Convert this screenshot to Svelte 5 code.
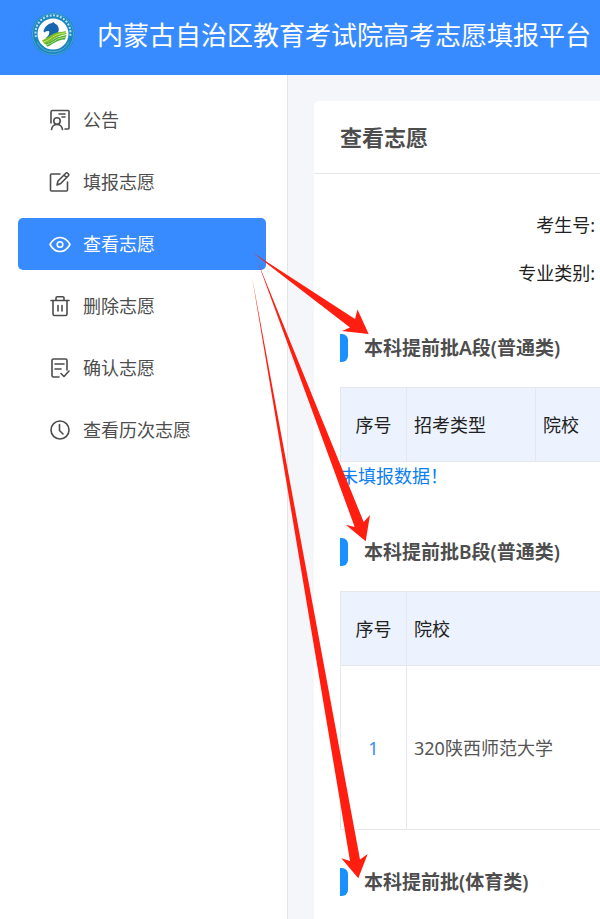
<script lang="ts">
  type Icon = 'notice' | 'edit' | 'view' | 'trash' | 'confirm' | 'history';

  const menu: { icon: Icon; label: string }[] = [
    { icon: 'notice', label: '公告' },
    { icon: 'edit', label: '填报志愿' },
    { icon: 'view', label: '查看志愿' },
    { icon: 'trash', label: '删除志愿' },
    { icon: 'confirm', label: '确认志愿' },
    { icon: 'history', label: '查看历次志愿' },
  ];

  let active = $state<Icon>('view');
</script>

<div class="page">
  <header>
    <svg class="logo" viewBox="0 0 44 44" aria-hidden="true">
      <circle cx="22" cy="22" r="21.5" fill="#1b86bd" />
      <circle cx="22" cy="22" r="20.5" fill="none" stroke="#4aa5d3" />
      <path
        d="M5 25a17.500 17.500 0 1 1 34 0" fill="none" stroke="#b5deef"
        stroke-width="2" stroke-dasharray="2 1.500"
      />
      <path d="M6 30a18 18 0 0 0 32 0" fill="none" stroke="#58add6" stroke-width="1" />
      <circle cx="22" cy="22" r="15.5" fill="#fff" />
      <path
        d="M12.500 19.500c1-4.500 4-7.500 8.500-8.500l1.500-1 1 1.200c3 1.300 4.500 4 4.300 7l-1 2.800-8.300 4.500-4 .5c3-2 4.500-4.500 3.500-7l-3 .3-1.200 1.200z"
        fill="#1767ae"
      />
      <path d="M11 28.500c5-2 7-5 12-7 4-2 8-1 11.500-2.500l1 3c-5 1-7 2-11 4-4 3-7 5-11 6z" fill="#79bd24" />
      <path d="M14 31.500c5-1 8-4 12-6 4-1 7-2 9.500-2.500l-1.500 4.500c-5 0-8 2-12 4-3 2-4 3-6 3z" fill="#41aa38" />
      <path d="M12.500 30c7-2 9-6 14-7.500l8.500-2M15 33c7-2 9-5 13-6.500l7-1.500" fill="none" stroke="#d9ed8a" stroke-width=".8" />
    </svg>
    <h1>内蒙古自治区教育考试院高考志愿填报平台</h1>
  </header>

  <div class="body">
    <nav>
      {#each menu as item (item.icon)}
        <a
          href="#{item.icon}"
          class:active={item.icon === active}
          onclick={() => (active = item.icon)}
        >
          <svg class="icon" viewBox="0 0 22 22" aria-hidden="true">
            {#if item.icon === 'notice'}
              <path d="M2 14V3A1.500 1.500 0 0 1 3.500 1.500H19a1 1 0 0 1 1 1V19a1 1 0 0 1-1 1h-3M10 5h6M13 8h3" />
              <circle cx="8" cy="12" r="3.200" />
              <path d="M2.500 20.500c.5-3 2.500-5 5.500-5s5 2 5.500 5" />
            {:else if item.icon === 'edit'}
              <path d="M11 3H2.500a1 1 0 0 0-1 1v15a1 1 0 0 0 1 1h15a1 1 0 0 0 1-1v-8" />
              <path d="M8 14l1-4 7.800-7.800a1.300 1.300 0 0 1 1.900 0l.7.700a1.300 1.300 0 0 1 0 1.900L11.700 12.500zM15 4l2.500 2.500" />
            {:else if item.icon === 'view'}
              <path d="M1 11.500C3.500 7 7 4.500 11 4.500s7.500 2.500 10 7c-2.500 4.500-6 7-10 7s-7.500-2.500-10-7z" />
              <circle cx="11" cy="11.500" r="2.800" />
            {:else if item.icon === 'trash'}
              <path d="M2 5.500h18M7 5.500V3a1.200 1.200 0 0 1 1.200-1.200h5.600A1.200 1.200 0 0 1 15 3v2.500M4 5.500V19a1.500 1.500 0 0 0 1.500 1.500h11A1.500 1.500 0 0 0 18 19V5.500M9 10.500v5.500M13 10.500v5.500" />
            {:else if item.icon === 'confirm'}
              <path d="M10 20H4.500A1.500 1.500 0 0 1 3 18.500v-15A1.500 1.500 0 0 1 4.500 2h12A1.500 1.500 0 0 1 18 3.500V13M6 7h9M6 12h6M12 16.500l3 3 5-5.500" />
            {:else}
              <circle cx="11" cy="11" r="9" />
              <path d="M10.500 5.500v6l3.500 3.500" />
            {/if}
          </svg>
          {item.label}
        </a>
      {/each}
    </nav>

    <main>
      <div class="card">
        <h2>查看志愿</h2>

        <div class="content">
          <div class="info">
            <div>考生号:</div>
            <div>专业类别:</div>
          </div>

          <section>
            <h3>本科提前批A段(普通类)</h3>
            <table>
              <thead>
                <tr>
                  <th class="no">序号</th>
                  <th class="type">招考类型</th>
                  <th>院校</th>
                </tr>
              </thead>
            </table>
            <p class="empty">未填报数据！</p>
          </section>

          <section>
            <h3>本科提前批B段(普通类)</h3>
            <table>
              <thead>
                <tr>
                  <th class="no">序号</th>
                  <th>院校</th>
                </tr>
              </thead>
              <tbody>
                <tr>
                  <td class="no">1</td>
                  <td>320陕西师范大学</td>
                </tr>
              </tbody>
            </table>
          </section>

          <section>
            <h3>本科提前批(体育类)</h3>
          </section>
        </div>
      </div>
    </main>
  </div>

  <!-- arrows from the active menu item to each batch heading -->
  <svg class="arrows" width="600" height="919" viewBox="0 0 600 919" aria-hidden="true">
    <path d="M252.500 252.500L355 319l2.500-9.500L368.700 334l-26.700-3 8-3.500z" />
    <path d="M257 260L363.700 522l6.300-7-4.300 26.300-20-16.600 9 2.300z" />
    <path d="M252 277L360 859.500l7.700-5.500-9.400 24.300-17-20 8.700 2.700z" />
  </svg>
</div>

<style>
  :global(body) {
    margin: 0;
  }
  .page {
    position: relative;
    display: flex;
    flex-direction: column;
    min-height: 100vh;
    overflow: hidden;
    font-family: 'Noto Sans', 'Noto Sans CJK SC', sans-serif;
    font-size: 18px;
    line-height: 28px;
    color: #222;
  }
  h1,
  h2,
  h3,
  p {
    margin: 0;
  }
  header {
    display: flex;
    align-items: center;
    gap: 22px;
    padding: 0 0 6px 31px;
    height: 75px;
    box-sizing: border-box;
    background: #388bff;
    color: #fff;
  }
  .logo {
    flex: none;
    width: 44px;
    height: 44px;
    margin-bottom: 2px;
  }
  h1 {
    font-size: 26px;
    font-weight: 400;
    line-height: 36px;
    white-space: nowrap;
  }
  .body {
    display: flex;
    flex: 1;
  }
  nav {
    display: flex;
    flex: none;
    flex-direction: column;
    gap: 10px;
    box-sizing: border-box;
    width: 288px;
    padding: 19px 21px 0 18px;
    border-right: 1px solid #e3e4e6;
    background: #fff;
  }
  nav a {
    display: flex;
    align-items: center;
    gap: 12px;
    height: 52px;
    padding-left: 31px;
    border-radius: 5px;
    color: #4d4d4d;
    text-decoration: none;
  }
  nav a.active {
    background: #388bff;
    color: #fff;
  }
  .icon {
    width: 22px;
    height: 22px;
    fill: none;
    stroke: currentColor;
    stroke-width: 1.6;
    stroke-linecap: round;
    stroke-linejoin: round;
  }
  main {
    display: flex;
    flex: 1;
    min-width: 0;
    padding: 26px 0 0 26px;
    background: #f4f6f9;
  }
  .card {
    flex: 1;
    min-width: 0;
    border-radius: 5px 0 0 0;
    background: #fff;
  }
  h2 {
    padding: 20px 26px;
    border-bottom: 1px solid #e6e7ea;
    color: #4d4d4d;
    font-size: 22px;
    font-weight: 600;
    line-height: 32px;
  }
  .content {
    padding: 37px 0 0 26px;
  }
  .info {
    display: flex;
    flex-direction: column;
    gap: 20px;
    padding-right: 5px;
    margin-bottom: 47px;
    text-align: right;
  }
  section {
    margin-bottom: 38px;
  }
  section:last-child {
    margin-bottom: 20px;
  }
  h3 {
    display: flex;
    align-items: center;
    gap: 16px;
    color: #4d4d4d;
    font-size: 19px;
    font-weight: 600;
    line-height: 28px;
    white-space: nowrap;
  }
  h3::before {
    content: '';
    width: 8px;
    height: 28px;
    border-radius: 0 6px 6px 0;
    background: #1890ff;
  }
  table {
    width: 100%;
    margin-top: 25px;
    border-collapse: separate;
    border-spacing: 0;
    border-top: 1px solid #e6e7ea;
    border-left: 1px solid #e6e7ea;
    table-layout: fixed;
  }
  th,
  td {
    box-sizing: border-box;
    padding: 0 7px;
    border-right: 1px solid #e6e7ea;
    border-bottom: 1px solid #e6e7ea;
    text-align: left;
  }
  th:last-child,
  td:last-child {
    border-right: 0;
  }
  th {
    height: 74px;
    background: #ecf3fe;
    font-weight: 400;
  }
  td {
    height: 164px;
    color: #555;
  }
  .no {
    width: 66px;
    text-align: center;
  }
  td.no {
    color: #388bff;
  }
  .type {
    width: 129px;
  }
  .empty {
    margin-bottom: 48px;
    color: #0c80f2;
  }
  .arrows {
    position: absolute;
    top: 0;
    left: 0;
    fill: #ff1e10;
    pointer-events: none;
  }
</style>
